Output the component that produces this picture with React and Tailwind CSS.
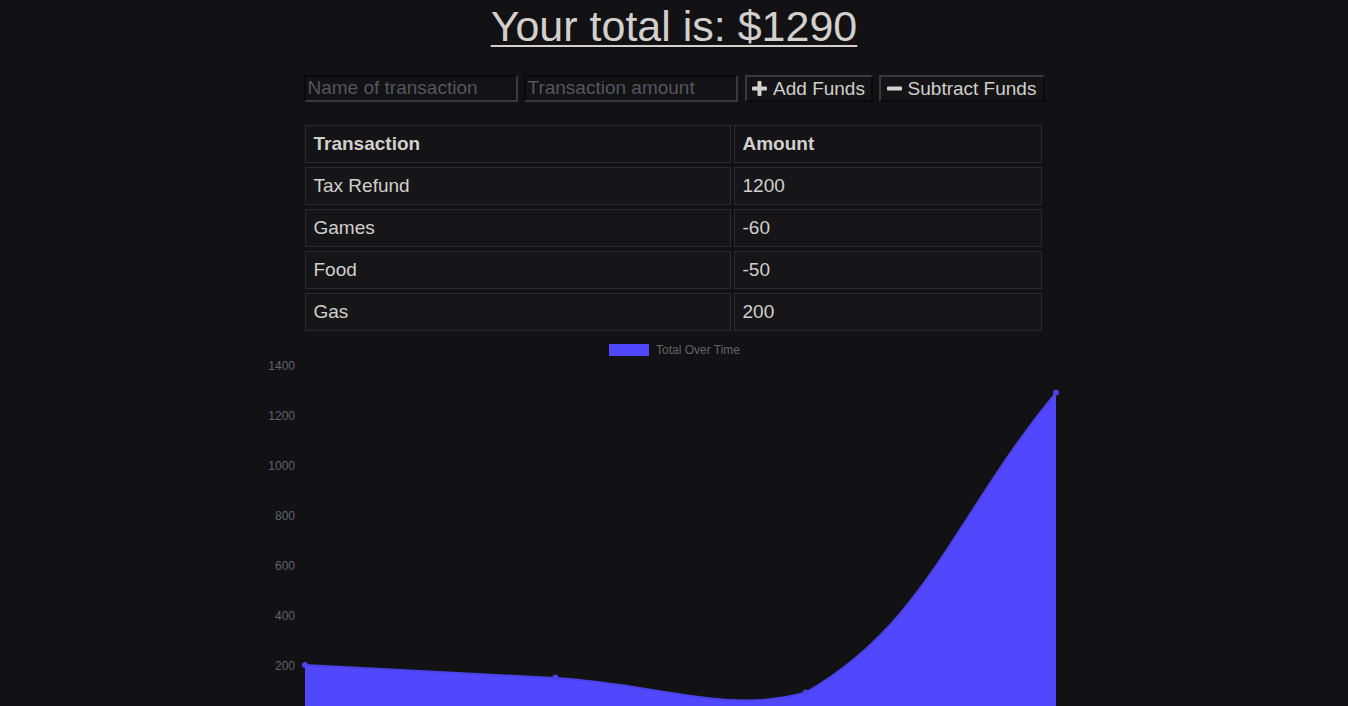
import React from 'react';

const rows = [
  { name: 'Tax Refund', amount: 1200 },
  { name: 'Games', amount: -60 },
  { name: 'Food', amount: -50 },
  { name: 'Gas', amount: 200 },
];

// chart scale: 0.25px per unit, zero line at y=375 inside the svg (svg top = page y 340)
const yTicks = [1400, 1200, 1000, 800, 600, 400, 200];
const yOf = (v) => 375 - v * 0.25;

function Chart() {
  const pts = [
    [305, yOf(200)],
    [555.3, yOf(150)],
    [805.7, yOf(90)],
    [1056, yOf(1290)],
  ];
  const curve =
    `M305,${yOf(200)} C405.1,330.5 455.2,332.6 555.3,338 ` +
    `C655.5,343.4 727.3,375 805.7,352.5 ` +
    `C927.6,283.1 955.9,172.8 1056,53`;
  return (
    <svg width="1348" height="380" className="block" style={{ fontFamily: '"Liberation Sans", Arial, sans-serif' }}>
      <rect x="609" y="4" width="40" height="12" fill="#5148fe" />
      <text x="656" y="14" fontSize="12" fill="#626266">Total Over Time</text>
      {yTicks.map((t) => (
        <text key={t} x="295" y={yOf(t) + 5} fontSize="12" fill="#626266" textAnchor="end">{t}</text>
      ))}
      <path d={curve + ' L1056,380 L305,380 Z'} fill="#5148fe" />
      <path d={curve} fill="none" stroke="#4b43e6" strokeWidth="2" />
      {pts.map(([x, y], i) => (
        <circle key={i} cx={x} cy={y} r="3" fill="#4b43e6" />
      ))}
    </svg>
  );
}

function PlusIcon() {
  return (
    <svg width="15" height="15" viewBox="0 0 15 15" className="shrink-0">
      <rect x="5.5" y="0" width="4" height="15" rx="1" fill="#d4d1ce" />
      <rect x="0" y="5.5" width="15" height="4" rx="1" fill="#d4d1ce" />
    </svg>
  );
}

function MinusIcon() {
  return (
    <svg width="15" height="15" viewBox="0 0 15 15" className="shrink-0">
      <rect x="0" y="5.5" width="15" height="4" rx="1" fill="#d4d1ce" />
    </svg>
  );
}

export default function App() {
  return (
    <div
      className="min-h-[706px] w-full overflow-hidden bg-[#121215] text-[#d2cfcc]"
      style={{ fontFamily: '"Liberation Sans", Arial, sans-serif' }}
    >
      <h1 className="text-center text-[43px] leading-[52px] underline decoration-2 underline-offset-[4px]">
        Your total is: $1290
      </h1>

      <div className="mt-[23px] flex justify-center gap-[6px]">
        <input
          placeholder="Name of transaction"
          className="h-[27px] w-[214px] border-2 border-t-[#0a0a0b] border-l-[#0a0a0b] border-b-[#3a3a3d] border-r-[#3a3a3d] bg-[#131316] px-[2px] text-[19px] text-[#d4d1ce] placeholder:text-[#55555a] outline-none"
        />
        <input
          placeholder="Transaction amount"
          className="h-[27px] w-[214px] border-2 border-t-[#0a0a0b] border-l-[#0a0a0b] border-b-[#3a3a3d] border-r-[#3a3a3d] bg-[#131316] px-[2px] text-[19px] text-[#d4d1ce] placeholder:text-[#55555a] outline-none"
        />
        <button className="ml-[1px] flex h-[27px] w-[128px] items-center justify-center gap-[6px] border-2 border-t-[#3a3a3d] border-l-[#3a3a3d] border-b-[#0a0a0b] border-r-[#0a0a0b] bg-[#141417] text-[19px] leading-none">
          <PlusIcon />
          Add Funds
        </button>
        <button className="flex h-[27px] w-[166px] items-center justify-center gap-[6px] border-2 border-t-[#3a3a3d] border-l-[#3a3a3d] border-b-[#0a0a0b] border-r-[#0a0a0b] bg-[#141417] text-[19px] leading-none">
          <MinusIcon />
          Subtract Funds
        </button>
      </div>

      <div className="mt-[23px] flex justify-center">
        <div className="-ml-[2px] grid w-[737px] grid-cols-[426px_308px] gap-x-[3px] gap-y-[4px] text-[19px]">
          <div className="flex h-[38px] items-center border border-[#2b2b2f] bg-[#141417] pl-[8px] font-bold">Transaction</div>
          <div className="flex h-[38px] items-center border border-[#2b2b2f] bg-[#141417] pl-[8px] font-bold">Amount</div>
          {rows.map((r) => (
            <React.Fragment key={r.name}>
              <div className="flex h-[38px] items-center border border-[#2b2b2f] bg-[#161619] pl-[8px]">{r.name}</div>
              <div className="flex h-[38px] items-center border border-[#2b2b2f] bg-[#161619] pl-[8px]">{r.amount}</div>
            </React.Fragment>
          ))}
        </div>
      </div>

      <div className="mt-[9px]">
        <Chart />
      </div>
    </div>
  );
}
